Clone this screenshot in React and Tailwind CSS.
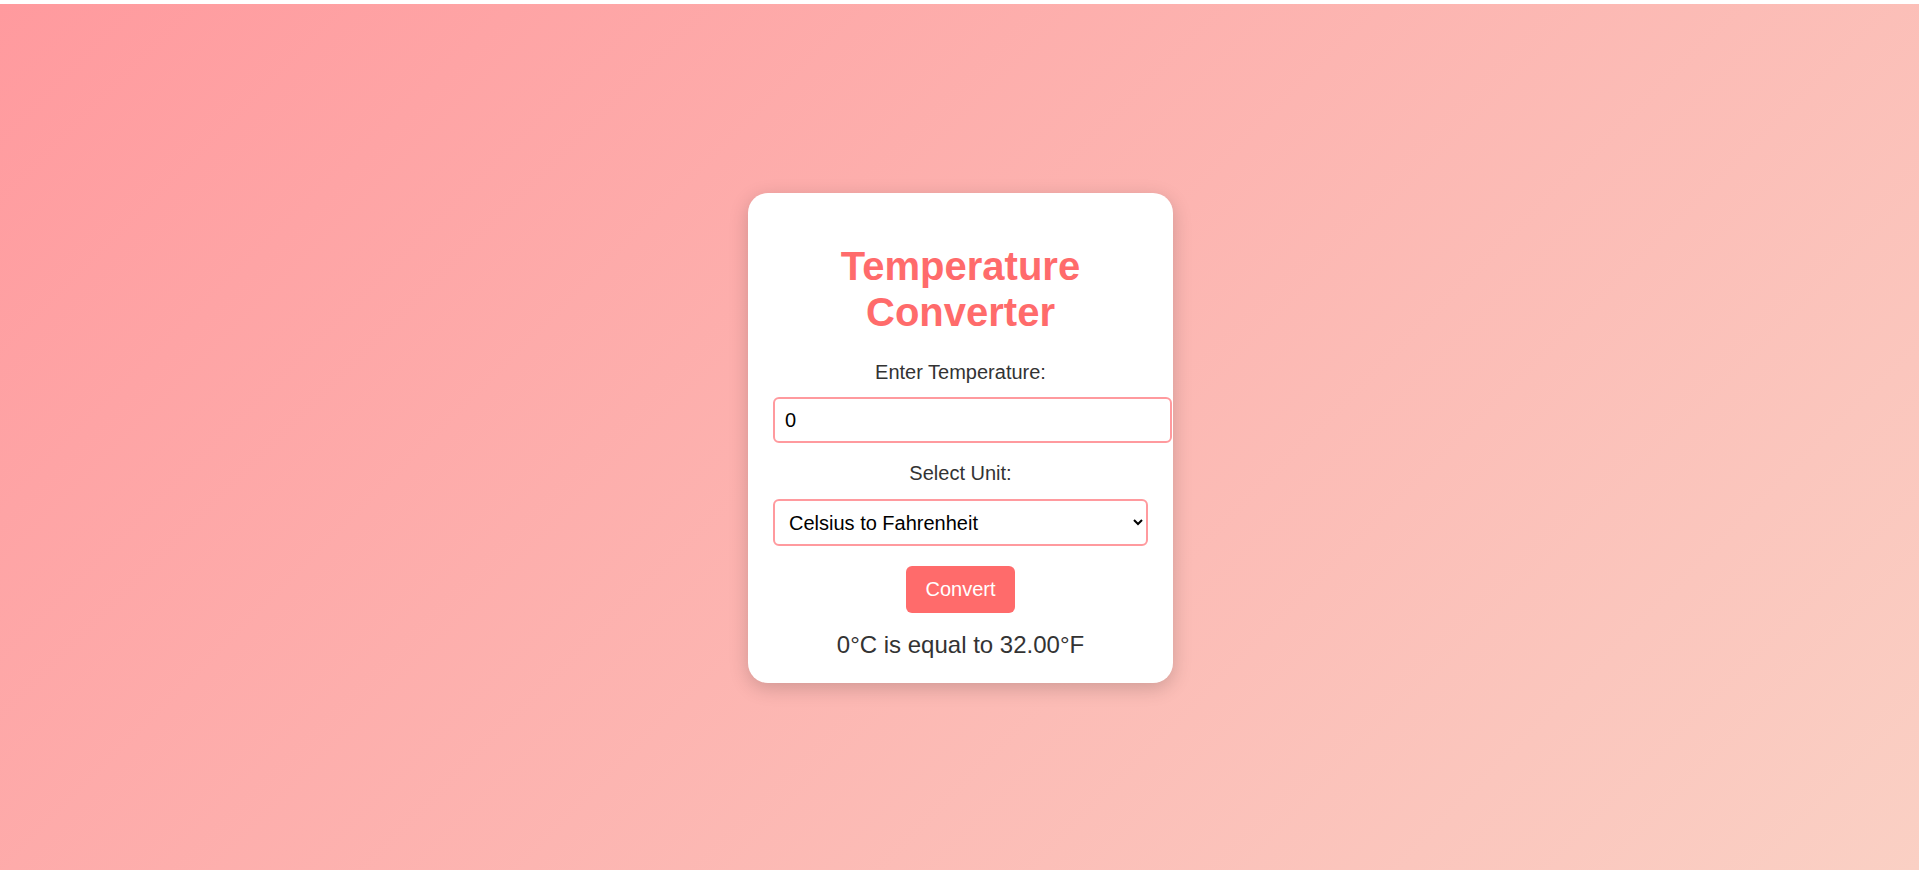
import React, { useState } from 'react';

export default function App() {
  const [temp, setTemp] = useState('0');
  const [unit, setUnit] = useState('c2f');
  const [result, setResult] = useState('0°C is equal to 32.00°F');

  const convert = () => {
    const v = parseFloat(temp);
    if (isNaN(v)) {
      setResult('Please enter a valid number');
      return;
    }
    if (unit === 'c2f') setResult(`${v}°C is equal to ${(v * 9 / 5 + 32).toFixed(2)}°F`);
    else setResult(`${v}°F is equal to ${((v - 32) * 5 / 9).toFixed(2)}°C`);
  };

  return (
    <div className="bg-white pt-[4px] font-['Liberation_Sans',Arial,sans-serif]">
      <div className="h-[866px] flex items-center justify-center pt-[2px] pl-[2px] bg-[linear-gradient(135deg,#ff9a9e,#fad0c4)]">
        <div className="w-[425px] bg-white rounded-[20px] px-[25px] pt-[25px] pb-[24px] text-center shadow-[0_5px_19px_rgba(0,0,0,0.18)]">
          <h1 className="text-[40px] leading-[46px] font-bold text-[#ff6b6b] mt-[25px] mb-[26px]">
            Temperature Converter
          </h1>

          <label className="block text-[20px] leading-[23px] text-[#333] mb-[13px]">Enter Temperature:</label>
          <input
            type="number"
            value={temp}
            onChange={(e) => setTemp(e.target.value)}
            className="block w-[399px] h-[46px] px-[10px] text-[20px] leading-[23px] text-black text-left border-2 border-[#ff9a9e] rounded-[6px] outline-none mb-[19px] [appearance:textfield] [&::-webkit-inner-spin-button]:appearance-none"
          />

          <label className="block text-[20px] leading-[23px] text-[#333] mb-[14px]">Select Unit:</label>
          <select
            value={unit}
            onChange={(e) => setUnit(e.target.value)}
            className="block w-[375px] h-[47px] px-[10px] text-[20px] leading-[23px] text-black border-2 border-[#ff9a9e] rounded-[6px] outline-none bg-white mb-[20px]"
          >
            <option value="c2f">Celsius to Fahrenheit</option>
            <option value="f2c">Fahrenheit to Celsius</option>
          </select>

          <button
            onClick={convert}
            className="h-[47px] px-[19px] bg-[#ff6b6b] text-white text-[20px] leading-[23px] rounded-[6px] cursor-pointer"
          >
            Convert
          </button>

          <p className="text-[24px] leading-[28px] text-[#333] mt-[18px]">{result}</p>
        </div>
      </div>
    </div>
  );
}
